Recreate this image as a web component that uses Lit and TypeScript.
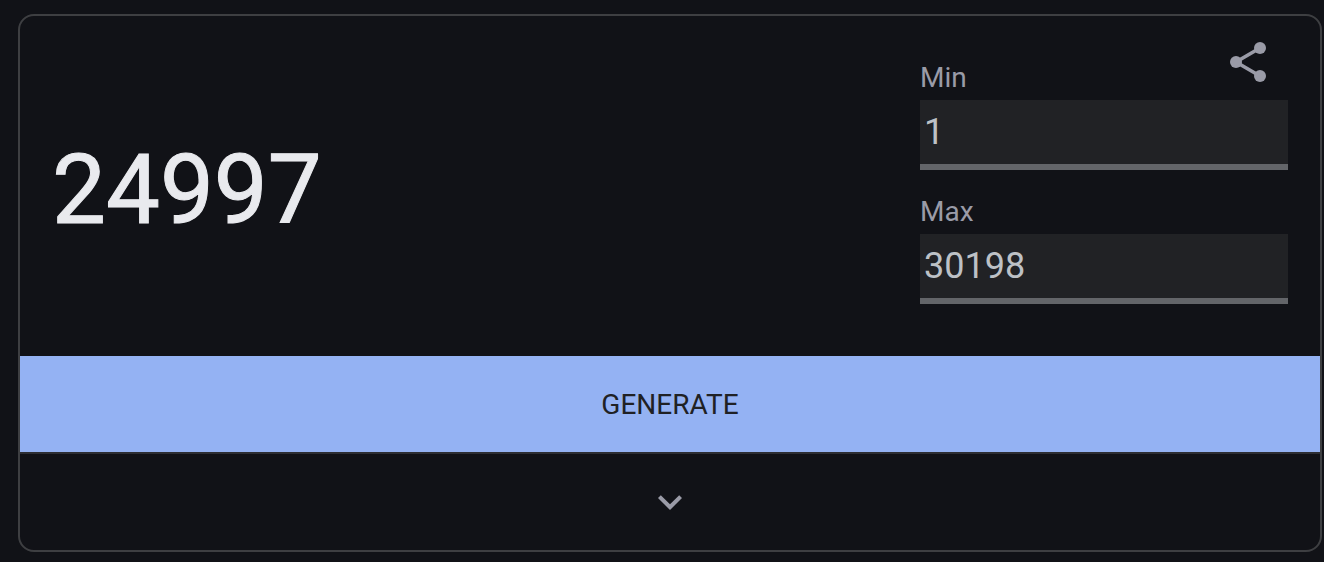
import { LitElement, html, css } from "lit";
import { customElement, state } from "lit/decorators.js";

@customElement("app-root")
export class AppRoot extends LitElement {
  @state() private min = 1;
  @state() private max = 30198;
  @state() private value = 24997;
  @state() private expanded = false;

  static styles = css`
    :host {
      display: block;
      box-sizing: border-box;
      min-height: 100vh;
      padding: 14px 2px 10px 18px;
      background: #111217;
      color: #e8eaed;
      font-family: Roboto, "Liberation Sans", sans-serif;
    }
    .card {
      position: relative;
      border: 2px solid #3e3f42;
      border-radius: 16px;
      overflow: hidden;
    }
    .content {
      display: flex;
      align-items: center;
      justify-content: space-between;
      gap: 32px;
      padding: 44px 32px 52px;
    }
    .result {
      padding-top: 16px;
      font-size: 96px;
      line-height: 112px;
      color: #e9eaee;
      -webkit-text-stroke: 1px currentColor;
    }
    .fields {
      display: flex;
      flex-direction: column;
      gap: 24px;
      width: 368px;
    }
    .field {
      display: flex;
      flex-direction: column;
      gap: 4px;
    }
    .label {
      font-size: 28px;
      line-height: 36px;
      color: #9a9ba7;
    }
    .input {
      box-sizing: border-box;
      width: 100%;
      height: 70px;
      margin: 0;
      padding: 0 4px;
      border: 0;
      border-bottom: 6px solid #636569;
      border-radius: 0;
      outline: none;
      background: #212225;
      color: #bdc1c6;
      font: inherit;
      font-size: 36px;
    }
    .share,
    .generate,
    .expand {
      margin: 0;
      padding: 0;
      border: 0;
      background: none;
      font: inherit;
      cursor: pointer;
    }
    .share {
      position: absolute;
      top: 22px;
      right: 48px;
      display: flex;
    }
    .generate {
      display: block;
      width: 100%;
      height: 96px;
      background: #94b2f3;
      color: #202124;
      font-size: 28px;
    }
    .expand {
      display: flex;
      align-items: center;
      justify-content: center;
      box-sizing: border-box;
      width: 100%;
      height: 98px;
      border-top: 2px solid #2d2e33;
    }
    .icon {
      display: block;
      width: 48px;
      height: 48px;
      fill: #9a9ba7;
    }
    .link {
      fill: none;
      stroke: #9a9ba7;
      stroke-width: 1.8;
    }
  `;

  private generate() {
    this.value = Math.floor(Math.random() * (this.max - this.min + 1)) + this.min;
  }

  render() {
    return html`
      <main class="card">
        <section class="content">
          <output class="result" for="min max">${this.value}</output>
          <div class="fields">
            <div class="field">
              <label class="label" for="min">Min</label>
              <input
                class="input"
                id="min"
                type="text"
                inputmode="numeric"
                .value=${String(this.min)}
                @change=${(e: Event) => (this.min = Number((e.target as HTMLInputElement).value))}
              />
            </div>
            <div class="field">
              <label class="label" for="max">Max</label>
              <input
                class="input"
                id="max"
                type="text"
                inputmode="numeric"
                .value=${String(this.max)}
                @change=${(e: Event) => (this.max = Number((e.target as HTMLInputElement).value))}
              />
            </div>
          </div>
          <button class="share" type="button" aria-label="Share">
            <svg class="icon" viewBox="0 0 24 24" aria-hidden="true">
              <path class="link" d="M18 5 6 12l12 7" />
              <circle cx="18" cy="5" r="3" />
              <circle cx="6" cy="12" r="3" />
              <circle cx="18" cy="19" r="3" />
            </svg>
          </button>
        </section>
        <button class="generate" type="button" @click=${this.generate}>GENERATE</button>
        <button
          class="expand"
          type="button"
          aria-label="More tools"
          aria-expanded=${String(this.expanded)}
          @click=${() => (this.expanded = !this.expanded)}
        >
          <svg class="icon" viewBox="0 0 24 24" aria-hidden="true">
            <path d="M16.59 8.59 12 13.17 7.41 8.59 6 10l6 6 6-6z" />
          </svg>
        </button>
      </main>
    `;
  }
}
